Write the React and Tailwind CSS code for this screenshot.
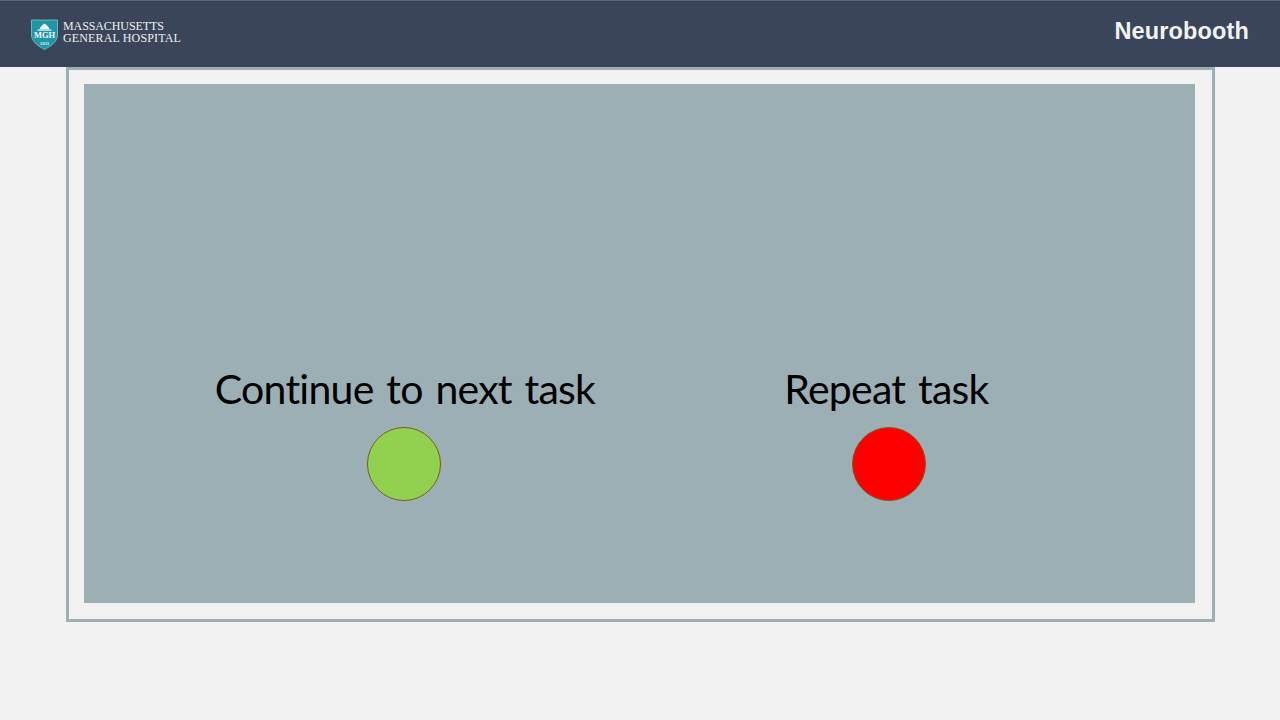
import React from 'react';

function MghShield() {
  return (
    <svg width="27" height="31" viewBox="0 0 27 31" className="shrink-0">
      <path d="M0.5 1 H26.5 V16 C26.5 23 19 27.5 13.5 30.5 C8 27.5 0.5 23 0.5 16 Z" fill="#1f95a8" stroke="#8fd0da" strokeWidth="0.7" />
      <path d="M8.5 10.5 C9 7.5 11 6.5 13.5 4.5 C16 6.5 18 7.5 18.5 10.5 Z" fill="#e8f3f5" />
      <rect x="6.5" y="10.5" width="14" height="1.2" fill="#e8f3f5" />
      <text x="13.5" y="19" textAnchor="middle" fontSize="8.5" fontWeight="700" fill="#f4f8f9" fontFamily="'Liberation Serif', serif">MGH</text>
      <text x="13.5" y="25.5" textAnchor="middle" fontSize="5" fontWeight="700" fill="#dcecef" fontFamily="'Liberation Serif', serif">1811</text>
    </svg>
  );
}

function Choice({ label, color, className, dotClass }) {
  return (
    <div className={`flex flex-col items-center ${className}`}>
      <div className="text-[41px] leading-[46px] tracking-[-0.75px] [word-spacing:3px] [font-variant-ligatures:none] text-black whitespace-nowrap font-['Lato',sans-serif]">{label}</div>
      <div className={`w-[74px] h-[74px] mt-[15px] rounded-full border border-[#7f5a1e] ${color} ${dotClass}`}></div>
    </div>
  );
}

export default function App() {
  return (
    <div className="w-[1280px] h-[720px] bg-[#f2f2f2] overflow-hidden">
      <header className="h-[67px] bg-[#3b4559] border-t border-[#5c6472] flex items-center justify-between pl-[31px] pr-[31px]">
        <div className="flex items-center gap-[5px]">
          <MghShield />
          <div className="text-[12px] leading-[11.5px] pb-[3px] text-[#eef0f2] font-['Liberation_Serif',serif]">
            <div className="tracking-[-0.1px]">MASSACHUSETTS</div>
            <div className="tracking-[0.15px]">GENERAL HOSPITAL</div>
          </div>
        </div>
        <div className="text-[23.5px] pb-[4px] font-bold text-[#f2f2f2] tracking-[0.14px] font-['Liberation_Sans',sans-serif]">Neurobooth</div>
      </header>
      <div className="ml-[66px] w-[1149px] h-[555px] border-[3px] border-[#9cafb5] pt-[14px] pl-[15px]">
        <div className="w-[1111px] h-[519px] bg-[#9cafb5] flex pt-[282px]">
          <Choice label="Continue to next task" color="bg-[#92d050]" dotClass="mr-[2px]" className="ml-[131px] w-[380px]" />
          <Choice label="Repeat task" color="bg-[#ff0000]" dotClass="ml-[4px]" className="ml-[191px] w-[201px]" />
        </div>
      </div>
    </div>
  );
}
